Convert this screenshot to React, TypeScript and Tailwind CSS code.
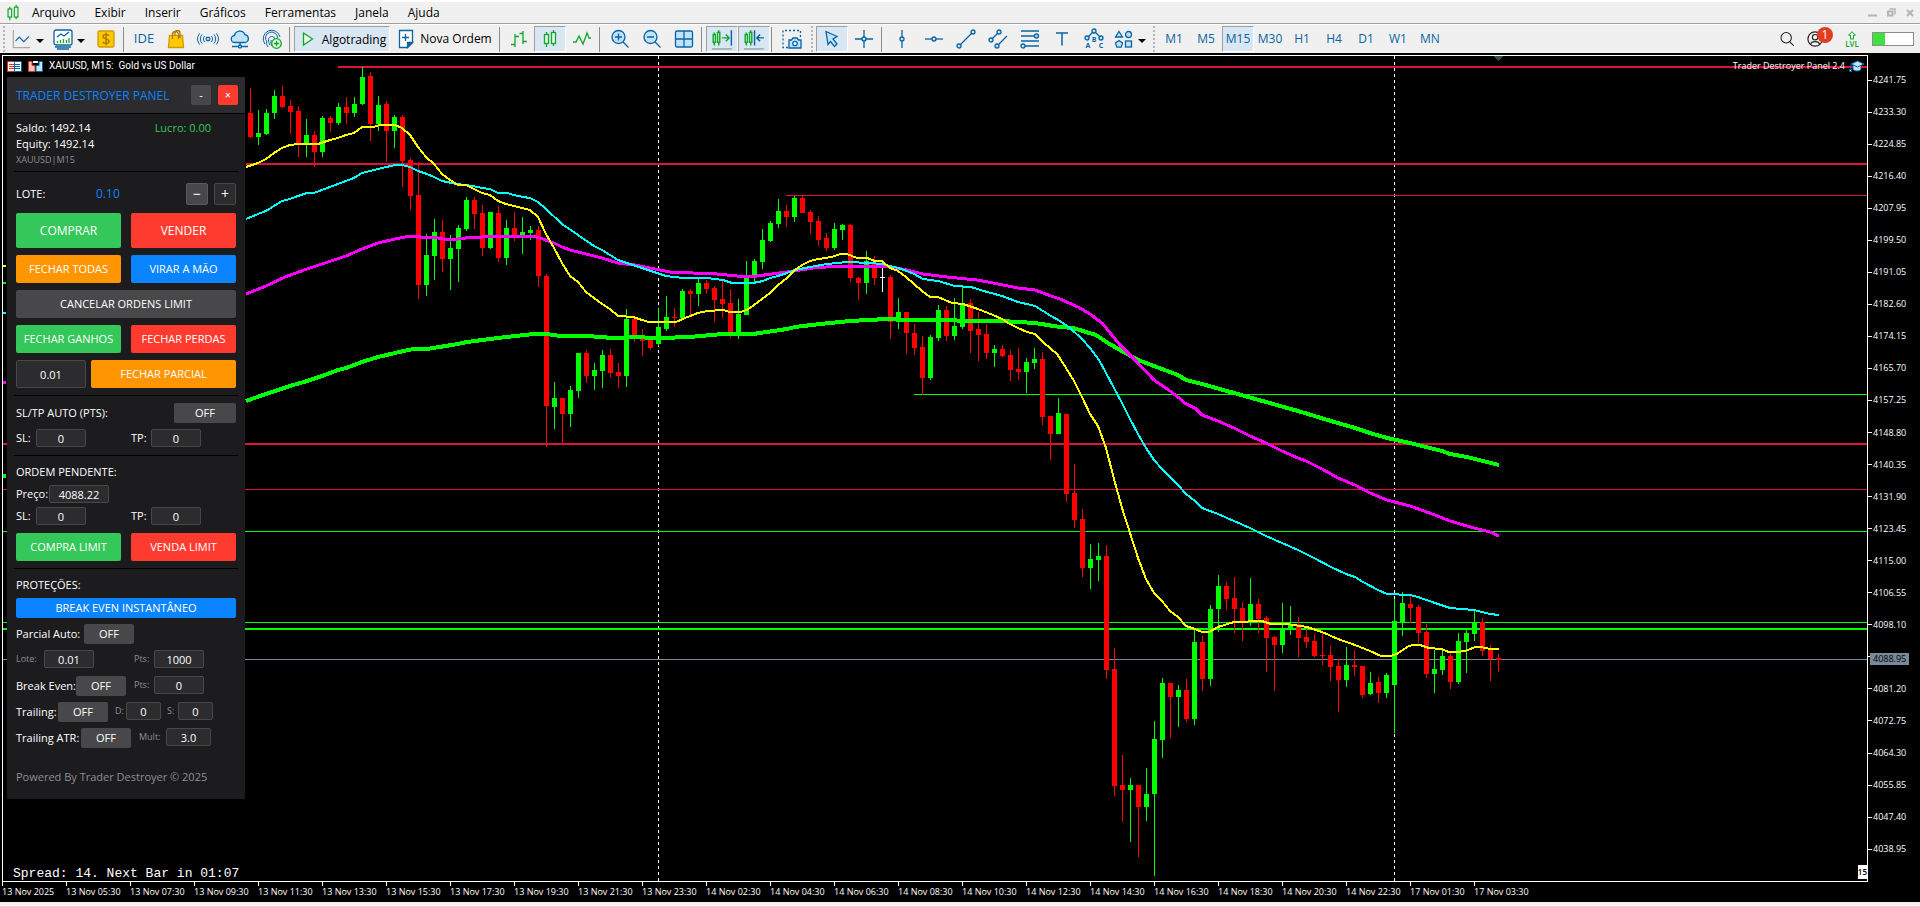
import type { ReactNode } from 'react'
import clsx from 'clsx'

const BLUE = '#0a64a4'
const SKY = '#bfe3fb'
const GREEN = '#12a52b'

// [direction, high, body top, body bottom, low], one bar every 8px
type Bar = ['g' | 'r' | 'w', number, number, number, number]

const BARS: Bar[] = [
  ['r', 88, 113, 137, 138], ['g', 110, 133, 137, 145], ['g', 109, 113, 134, 135], ['g', 90, 96, 113, 119],
  ['r', 86, 96, 107, 108], ['r', 100, 106, 112, 134], ['r', 106, 111, 143, 157], ['g', 119, 135, 144, 157],
  ['r', 131, 135, 152, 167], ['g', 116, 118, 152, 157], ['r', 116, 118, 123, 132], ['g', 103, 107, 123, 125],
  ['r', 97, 107, 113, 124], ['g', 97, 104, 113, 117], ['g', 67, 77, 104, 105], ['r', 72, 76, 124, 141],
  ['g', 96, 105, 124, 131], ['r', 101, 104, 131, 162], ['g', 115, 117, 131, 148], ['r', 115, 117, 161, 187],
  ['r', 158, 160, 196, 210], ['r', 162, 195, 285, 299], ['g', 234, 255, 285, 296], ['g', 219, 232, 256, 280],
  ['r', 220, 232, 259, 272], ['g', 235, 248, 259, 290], ['g', 225, 228, 249, 282], ['g', 197, 200, 229, 231],
  ['r', 197, 200, 214, 229], ['r', 205, 213, 248, 256], ['g', 212, 212, 248, 249], ['r', 206, 213, 258, 262],
  ['g', 220, 228, 258, 265], ['r', 212, 228, 236, 241], ['g', 217, 232, 236, 254], ['g', 226, 230, 233, 240],
  ['r', 226, 230, 276, 287], ['r', 274, 276, 406, 447], ['g', 382, 398, 407, 429], ['r', 398, 398, 414, 444],
  ['g', 386, 390, 414, 427], ['g', 353, 353, 391, 398], ['r', 350, 353, 376, 383], ['g', 363, 370, 376, 390],
  ['g', 350, 355, 371, 388], ['r', 349, 355, 373, 377], ['r', 363, 372, 376, 388], ['g', 309, 319, 376, 387],
  ['r', 318, 319, 337, 342], ['r', 329, 339, 341, 356], ['r', 338, 339, 348, 350], ['g', 308, 327, 344, 346],
  ['g', 296, 317, 329, 331], ['r', 308, 317, 318, 327], ['g', 289, 291, 318, 318], ['r', 289, 291, 294, 316],
  ['g', 278, 283, 294, 306], ['r', 280, 283, 289, 294], ['r', 286, 288, 300, 322], ['r', 281, 299, 304, 318],
  ['r', 289, 303, 334, 338], ['g', 299, 314, 334, 339], ['g', 261, 276, 315, 315], ['g', 259, 261, 276, 282],
  ['g', 229, 240, 262, 269], ['g', 221, 223, 241, 242], ['g', 199, 211, 224, 228], ['r', 205, 211, 217, 227],
  ['g', 196, 198, 217, 222], ['r', 196, 198, 213, 213], ['r', 210, 212, 222, 234], ['r', 216, 221, 240, 246],
  ['r', 233, 238, 248, 251], ['g', 223, 229, 248, 250], ['g', 224, 225, 230, 240], ['r', 224, 225, 278, 282],
  ['r', 277, 278, 283, 300], ['g', 251, 261, 283, 294], ['r', 256, 263, 278, 285], ['w', 268, 277, 278, 292],
  ['r', 275, 277, 322, 339], ['g', 298, 312, 322, 329], ['r', 312, 312, 333, 354], ['r', 324, 333, 348, 355],
  ['r', 336, 347, 378, 395], ['g', 335, 337, 378, 380], ['g', 305, 310, 338, 341], ['r', 306, 310, 336, 341],
  ['g', 298, 326, 336, 340], ['g', 287, 303, 327, 329], ['r', 299, 303, 331, 353], ['r', 312, 329, 335, 361],
  ['r', 324, 334, 353, 359], ['g', 345, 349, 353, 367], ['r', 345, 349, 356, 357], ['r', 350, 355, 370, 381],
  ['r', 348, 369, 372, 380], ['g', 358, 362, 372, 393], ['g', 348, 359, 363, 369], ['r', 352, 359, 417, 425],
  ['r', 416, 416, 434, 460], ['g', 398, 413, 434, 434], ['r', 414, 414, 494, 502], ['r', 464, 493, 520, 528],
  ['r', 509, 519, 568, 577], ['g', 544, 559, 568, 589], ['g', 543, 556, 560, 581], ['r', 545, 556, 670, 679],
  ['r', 648, 669, 786, 796], ['r', 755, 785, 790, 822], ['g', 778, 785, 790, 842], ['r', 785, 785, 807, 857],
  ['g', 768, 794, 807, 821], ['g', 721, 739, 794, 876], ['g', 678, 683, 740, 758], ['r', 683, 683, 697, 738],
  ['g', 685, 690, 697, 727], ['r', 679, 690, 719, 722], ['g', 629, 642, 719, 725], ['r', 636, 642, 679, 691],
  ['g', 605, 609, 679, 686], ['g', 575, 586, 609, 632], ['r', 582, 586, 599, 610], ['r', 577, 598, 609, 633],
  ['r', 602, 608, 621, 641], ['g', 578, 604, 621, 626], ['r', 599, 604, 619, 633], ['r', 616, 618, 638, 672],
  ['r', 636, 637, 645, 691], ['g', 603, 629, 645, 653], ['g', 606, 624, 629, 635], ['r', 617, 624, 638, 657],
  ['r', 629, 637, 642, 648], ['r', 634, 641, 656, 657], ['r', 632, 655, 656, 665], ['r', 646, 655, 667, 681],
  ['r', 659, 666, 680, 712], ['g', 647, 665, 680, 687], ['r', 650, 665, 667, 676], ['r', 666, 666, 695, 698],
  ['g', 672, 683, 694, 695], ['r', 677, 682, 693, 703], ['g', 673, 675, 693, 698], ['g', 599, 621, 685, 733],
  ['g', 592, 603, 623, 636], ['r', 596, 604, 608, 623], ['r', 605, 607, 633, 643], ['r', 624, 632, 674, 678],
  ['g', 650, 669, 674, 693], ['g', 651, 656, 670, 675], ['r', 652, 656, 682, 689], ['g', 633, 641, 682, 684],
  ['g', 630, 633, 642, 673], ['g', 611, 622, 634, 641], ['r', 618, 622, 651, 656], ['r', 645, 650, 659, 681],
  ['r', 654, 658, 660, 672],
]

const BAR_COLORS = { g: '#00ff00', r: '#ff0000', w: '#ffffff' }

// moving averages, slowest first
const AVERAGES = [
  {
    color: '#00ff00',
    width: 4,
    points:
      '246,401 266,394 290,386 307,381 322,376 338,370 346,368 362,362 378,357 395,353 413,349 427,349 458,344 467,342 498,338 533,334 547,334 560,336 587,336 613,338 640,337 650,338 660,338 690,337 723,334 753,334 787,329 795,327 820,324 850,321 887,319 907,320 940,320 973,321 1002,321 1035,323 1060,327 1073,328 1096,335 1108,343 1120,350 1138,360 1154,366 1178,375 1186,380 1202,384 1234,393 1266,402 1298,411 1331,421 1355,428 1370,433 1387,438 1410,443 1442,451 1450,454 1467,457 1499,465',
  },
  {
    color: '#ff00ff',
    width: 3,
    points:
      '246,294 266,286 285,277 307,269 322,264 346,256 362,249 378,243 395,239 410,236 420,237 433,237 443,239 458,239 473,237 482,237 490,236 498,237 507,236 533,236 540,238 554,243 562,247 570,250 602,258 618,263 635,265 660,270 670,272 693,273 717,274 737,276 757,276 787,272 813,268 840,266 857,266 887,266 907,270 923,274 947,277 977,280 993,283 1018,288 1035,290 1051,296 1060,299 1078,307 1090,314 1102,323 1120,345 1135,360 1154,380 1170,391 1178,397 1186,404 1195,408 1202,415 1210,418 1218,421 1234,428 1250,436 1266,443 1282,451 1298,458 1306,461 1322,469 1338,478 1355,485 1370,493 1387,500 1410,506 1435,515 1450,521 1467,526 1474,528 1490,532 1499,536',
  },
  {
    color: '#00ffff',
    width: 2,
    points:
      '246,219 258,214 266,211 274,206 282,201 290,199 298,196 307,193 314,193 330,187 346,181 354,178 362,173 378,169 395,165 402,165 410,167 418,171 427,174 434,177 442,181 457,184 473,186 482,188 490,189 498,193 507,193 514,195 523,197 530,198 538,202 546,209 562,224 578,235 594,246 602,250 618,260 627,263 642,268 651,271 660,274 666,276 683,278 707,278 723,280 732,283 753,283 763,281 770,278 778,276 787,273 795,270 810,267 827,264 847,262 870,263 882,264 898,268 907,271 914,274 923,279 938,281 955,286 971,287 987,292 1002,296 1018,302 1035,306 1043,311 1051,316 1060,321 1070,328 1082,339 1090,348 1099,360 1106,373 1122,403 1130,419 1138,434 1146,448 1154,460 1162,469 1170,477 1178,485 1186,494 1195,501 1202,508 1218,514 1234,521 1250,528 1266,536 1282,543 1298,550 1314,558 1331,567 1346,574 1355,577 1363,582 1378,590 1387,594 1410,595 1418,597 1435,603 1450,608 1474,610 1490,614 1499,615',
  },
  {
    color: '#ffff00',
    width: 2,
    points:
      '246,167 258,163 266,159 274,153 282,148 290,145 298,144 318,144 330,140 338,138 346,135 354,133 362,127 373,127 380,125 395,125 402,128 410,135 418,147 426,157 434,164 442,174 450,180 458,185 466,185 474,189 482,193 490,195 498,201 506,204 514,206 522,208 530,210 538,217 546,234 554,248 562,263 570,276 578,282 586,292 594,298 602,304 610,309 618,316 633,317 642,320 649,322 676,322 685,318 698,313 707,311 723,310 730,312 740,312 747,310 754,305 770,293 778,285 787,278 795,270 802,265 810,261 818,259 826,258 835,256 840,254 847,254 857,258 867,258 875,261 882,261 890,268 898,271 906,277 914,284 922,291 930,297 938,297 952,303 963,304 978,309 993,315 1002,319 1010,324 1018,328 1027,332 1035,334 1043,342 1051,349 1057,354 1061,360 1066,368 1074,381 1082,397 1090,414 1098,426 1106,448 1114,479 1122,508 1130,533 1138,558 1146,579 1154,593 1162,601 1170,611 1178,617 1186,626 1195,629 1202,632 1209,632 1218,627 1234,622 1262,621 1271,624 1287,624 1307,627 1322,632 1338,639 1355,645 1370,651 1381,656 1390,656 1397,654 1407,647 1412,645 1420,645 1429,648 1441,649 1449,652 1459,652 1468,650 1475,647 1481,647 1490,649 1499,649',
  },
]

// [start x, y, thickness, color]
const LEVELS: [number, number, number, string][] = [
  [338, 66, 2, '#dc143c'],
  [246, 163, 2, '#dc143c'],
  [786, 195, 1, '#dc143c'],
  [914, 394, 1, '#00ff00'],
  [3, 443, 2, '#dc143c'],
  [3, 489, 1, '#dc143c'],
  [3, 531, 1, '#00ff00'],
  [3, 622, 1, '#00ff00'],
  [3, 628, 2, '#00ff00'],
  [3, 659, 1, '#778899'],
]

// averages peeking out on the left of the panel
const STUBS: [number, number, string][] = [
  [265, 2, '#ffff00'],
  [282, 2, '#00ff00'],
  [312, 2, '#00ffff'],
  [381, 3, '#ff00ff'],
  [474, 4, '#00ff00'],
]

const PRICES = Array.from({ length: 25 }, (_, i) => (4241.75 - i * 8.45).toFixed(2))

const TIMES = [
  '13 Nov 2025', '13 Nov 05:30', '13 Nov 07:30', '13 Nov 09:30', '13 Nov 11:30', '13 Nov 13:30',
  '13 Nov 15:30', '13 Nov 17:30', '13 Nov 19:30', '13 Nov 21:30', '13 Nov 23:30', '14 Nov 02:30',
  '14 Nov 04:30', '14 Nov 06:30', '14 Nov 08:30', '14 Nov 10:30', '14 Nov 12:30', '14 Nov 14:30',
  '14 Nov 16:30', '14 Nov 18:30', '14 Nov 20:30', '14 Nov 22:30', '17 Nov 01:30', '17 Nov 03:30',
]

const MENU = ['Arquivo', 'Exibir', 'Inserir', 'Gráficos', 'Ferramentas', 'Janela', 'Ajuda']
const PERIODS = ['M1', 'M5', 'M15', 'M30', 'H1', 'H4', 'D1', 'W1', 'MN']

/* ---------- toolbar ---------- */

function Glyph({ children, color = BLUE, size = 20 }: { children: ReactNode; color?: string; size?: number }) {
  return (
    <svg width={size} height={size} viewBox="0 0 20 20" fill="none" stroke={color} strokeWidth="1.3" className="shrink-0 overflow-visible">
      {children}
    </svg>
  )
}

function Caret() {
  return (
    <svg width="8" height="4" viewBox="0 0 8 4" className="mt-1 shrink-0">
      <path d="M0 0h8L4 4z" fill="#000" />
    </svg>
  )
}

function Tool({ label, active, children, className = 'w-8' }: { label: string; active?: boolean; children: ReactNode; className?: string }) {
  return (
    <button
      type="button"
      aria-label={label}
      className={clsx(
        'flex h-[26px] shrink-0 items-center justify-center border',
        className,
        active ? 'border-t-[#a0a0a0] border-l-[#a0a0a0] border-r-white border-b-white bg-[#d9e6f3]' : 'border-transparent',
      )}
    >
      {children}
    </button>
  )
}

const Sep = () => (
  <div className="h-full w-1.5 shrink-0 pt-0.5 pb-px pl-px">
    <div className="h-full w-px bg-[#8c8c8c]" />
  </div>
)

const Grip = () => (
  <div className="flex h-full w-2 shrink-0 justify-center py-px">
    <div className="h-full border-l-2 border-dotted border-[#b4b4b4]" />
  </div>
)

function Candles({ size = 20 }: { size?: number }) {
  return (
    <Glyph color={GREEN} size={size}>
      <rect x="4.5" y="5.5" width="4" height="9" fill="#e6f7e8" />
      <path d="M6.5 3v2.5M6.5 14.5V18M13.5 1v2.5M13.5 14.5V17" />
      <rect x="11.5" y="3.5" width="4" height="11" fill="#e6f7e8" />
    </Glyph>
  )
}

function MenuBar() {
  return (
    <div className="flex h-6 shrink-0 items-center border-t-2 border-b border-t-white border-b-[#a0a0a0] bg-[#f0f0f0] pl-1">
      <Candles size={18} />
      <nav className="ml-2.5 flex gap-[19px] text-xs text-black">
        {MENU.map((m) => (
          <button key={m} type="button">
            {m}
          </button>
        ))}
      </nav>
      <div className="ml-auto flex items-center gap-2.5 pr-1.5">
        <button type="button" aria-label="Minimizar">
          <svg width="9" height="9" viewBox="0 0 9 9" className="block">
            <path d="M0 7.5h9" stroke="#b4b4b4" strokeWidth="2" />
          </svg>
        </button>
        <button type="button" aria-label="Restaurar">
          <svg width="9" height="9" viewBox="0 0 9 9" fill="none" stroke="#b4b4b4" className="block">
            <path d="M2.5 1H8v5.5" strokeWidth="1.5" />
            <rect x="1" y="3.5" width="4.5" height="4" strokeWidth="2" />
          </svg>
        </button>
        <button type="button" aria-label="Fechar">
          <svg width="8" height="8" viewBox="0 0 8 8" className="block">
            <path d="M1 1l6 6M7 1L1 7" stroke="#b4b4b4" strokeWidth="2" />
          </svg>
        </button>
      </div>
    </div>
  )
}

function Toolbar() {
  return (
    <div className="flex h-[29px] shrink-0 items-center overflow-hidden border-t border-white bg-[#f0f0f0] text-xs">
      <Grip />
      <Tool label="Gráfico de linha" className="w-10 gap-1.5">
        <Glyph size={18}>
          <path d="M1.500 0v19.500H20" stroke="#a8a8a8" />
          <path d="M4 12l4-4 5 5 6-6" />
        </Glyph>
        <Caret />
      </Tool>
      <Tool label="Indicadores" className="w-[42px] gap-1">
        <Glyph>
          <rect x="1" y="1" width="18" height="15" rx="2" fill="#fff" />
          <path d="M4 8l4-3 3 2 5-4M2 18h16M4 20h12" />
          <path d="M4.500 14v-2M7.500 14v-3M10.500 14v-4M13.500 14v-3M16 14V9" stroke={GREEN} />
        </Glyph>
        <Caret />
      </Tool>
      <Tool label="Cifrão">
        <Glyph color="#d19a00">
          <rect x="2" y="2" width="16" height="16" rx="1.500" fill="#ffc800" />
          <path d="M13 7c-.5-1.200-1.500-1.600-3-1.600-1.800 0-3 .8-3 2.200 0 3.200 6 1.600 6 4.600 0 1.500-1.200 2.300-3 2.300-1.600 0-2.700-.6-3.100-1.800M10 3.500v13" stroke="#b07c00" strokeWidth="1.500" />
        </Glyph>
      </Tool>
      <Sep />
      <Tool label="IDE">
        <span className="text-[13px] text-[#0a64a4]">IDE</span>
      </Tool>
      <Tool label="Market">
        <Glyph color="#d19a00">
          <path d="M3.500 6.500h13l1 12h-15z" fill="#ffc800" />
          <path d="M6.500 10V5.500a3 3 0 0 1 6 0V10M9 6V4a2.500 2.500 0 0 1 5 0v5" stroke="#b07c00" />
        </Glyph>
      </Tool>
      <Tool label="Sinais">
        <Glyph>
          <circle cx="10" cy="10" r="1.800" fill={SKY} />
          <path d="M6.500 7a4.500 4.500 0 0 0 0 6M13.500 7a4.500 4.500 0 0 1 0 6M4 5.500a7 7 0 0 0 0 9M16 5.500a7 7 0 0 1 0 9M1.500 4.500a9.500 9.500 0 0 0 0 11M18.500 4.500a9.500 9.500 0 0 1 0 11" strokeWidth="1" />
        </Glyph>
      </Tool>
      <Tool label="VPS">
        <Glyph>
          <path d="M5 13.500a3.500 3.500 0 0 1-.5-7 5.500 5.500 0 0 1 10.500-.8 4 4 0 0 1 .5 7.800z" fill={SKY} />
          <path d="M10 13.500v3M2 17.500h6M12 17.500h6" />
          <circle cx="10" cy="17.500" r="1.500" fill={SKY} />
        </Glyph>
      </Tool>
      <Tool label="Conta">
        <Glyph>
          <path d="M3 15A8.500 8.500 0 1 1 18 8M5 13a6 6 0 1 1 10.500-4M8 16c-2-3-2.500-8 1.500-8.500 2-.2 3 1 3.200 2.500M6 18c-1-1.500-1.500-3-1.500-5M10 17c-1-2-1.500-4-.8-6" strokeWidth="1" />
          <circle cx="14.500" cy="14.500" r="4.800" fill="#e6f9e8" stroke={GREEN} />
          <path d="M14.500 11.700v5.600M11.700 14.500h5.600" stroke={GREEN} />
        </Glyph>
      </Tool>
      <Sep />
      <Tool label="Algotrading" active className="w-24 gap-1">
        <Glyph color={GREEN}>
          <path d="M5.500 4l9 6-9 6z" fill="#e6f9e8" />
        </Glyph>
        <span className="pt-0.5">Algotrading</span>
      </Tool>
      <Tool label="Nova Ordem" className="w-27 gap-1">
        <Glyph>
          <path d="M3.500 1.500h13v12l-5 5h-8z" fill="#fff" />
          <path d="M16.500 13.500l-5 5v-5z" fill={BLUE} />
          <path d="M9.500 5v7M6 8.500h7" />
        </Glyph>
        Nova Ordem
      </Tool>
      <Sep />
      <Tool label="Barras" className="w-[30px]">
        <Glyph color={GREEN}>
          <path d="M6 5v13M2 15.500h4M6 7.500h4M14 2v13M10.500 4.500H14M14 12.500h4" />
        </Glyph>
      </Tool>
      <Tool label="Velas" active>
        <Candles />
      </Tool>
      <Tool label="Linha">
        <Glyph color={GREEN}>
          <path d="M1 13h3l3-6 4 8 4-11 2 5h2" />
        </Glyph>
      </Tool>
      <Sep />
      <Tool label="Mais zoom">
        <Glyph>
          <circle cx="8.500" cy="8" r="6.500" fill={SKY} />
          <path d="M13 13l5.500 5.500M8.500 4.500v7M5 8h7" />
        </Glyph>
      </Tool>
      <Tool label="Menos zoom">
        <Glyph>
          <circle cx="8.500" cy="8" r="6.500" fill={SKY} />
          <path d="M13 13l5.500 5.500M5 8h7" />
        </Glyph>
      </Tool>
      <Tool label="Organizar janelas">
        <Glyph>
          <rect x="1.500" y="2" width="17" height="16" rx="1.500" fill={SKY} />
          <path d="M10 2v16M1.500 10h17" />
        </Glyph>
      </Tool>
      <Sep />
      <Tool label="Rolagem automática" active>
        <Glyph color={GREEN} size={22}>
          <path d="M3 4v12M7 2v14M10 9h6M13.500 6l3 3-3 3" />
          <rect x="2" y="6" width="2" height="7" fill="#e6f9e8" />
          <rect x="6" y="4" width="2" height="9" fill="#e6f9e8" />
          <path d="M18.500 2v14" stroke={BLUE} />
          <path d="M1 19h18" stroke="#a0a0a0" />
        </Glyph>
      </Tool>
      <Tool label="Deslocar gráfico" active>
        <Glyph color={GREEN} size={22}>
          <path d="M3 4v12M7 2v14" />
          <rect x="2" y="6" width="2" height="7" fill="#e6f9e8" />
          <rect x="6" y="4" width="2" height="9" fill="#e6f9e8" />
          <path d="M10.500 2v14M19 9h-6M15.500 6l-3 3 3 3" stroke={BLUE} />
          <path d="M1 19h18" stroke="#a0a0a0" />
        </Glyph>
      </Tool>
      <Sep />
      <Tool label="Captura">
        <Glyph>
          <path d="M6 18.500H1v-17h17.500V9" strokeDasharray="2 2" />
          <path d="M7 11h2.500l1.500-2h4l1.500 2H19v8H7z" fill={SKY} />
          <circle cx="13" cy="14.500" r="2.200" fill="#fff" />
        </Glyph>
      </Tool>
      <Grip />
      <Tool label="Cursor" active>
        <Glyph>
          <path d="M4 2.500l11 5-4 2.500 4 5-2.500 2.500-4-5L6 15.500z" fill={SKY} />
        </Glyph>
      </Tool>
      <Tool label="Mira">
        <Glyph>
          <path d="M10 1v18M1 10h18" />
          <circle cx="10" cy="10" r="2" fill={SKY} />
        </Glyph>
      </Tool>
      <Sep />
      <Tool label="Linha vertical">
        <Glyph>
          <path d="M10 1v18" />
          <circle cx="10" cy="10" r="2" fill={SKY} />
        </Glyph>
      </Tool>
      <Tool label="Linha horizontal">
        <Glyph>
          <path d="M1 10h18" />
          <circle cx="10" cy="10" r="2" fill={SKY} />
        </Glyph>
      </Tool>
      <Tool label="Linha de tendência">
        <Glyph>
          <path d="M3 17L17 3" />
          <circle cx="3" cy="17" r="2" fill={SKY} />
          <circle cx="17" cy="3" r="2" fill={SKY} />
        </Glyph>
      </Tool>
      <Tool label="Canal">
        <Glyph>
          <path d="M3 11l8-8M9 17L19 7" />
          <circle cx="3" cy="11" r="2" fill={SKY} />
          <circle cx="11" cy="3" r="2" fill={SKY} />
          <circle cx="9" cy="17" r="2" fill={SKY} />
        </Glyph>
      </Tool>
      <Tool label="Fibonacci">
        <Glyph>
          <path d="M1 2h18M1 7h15M1 12h18M4 17h15" />
          <circle cx="16.500" cy="7" r="2" fill={SKY} />
          <circle cx="3" cy="17" r="2" fill={SKY} />
        </Glyph>
      </Tool>
      <Tool label="Texto">
        <Glyph>
          <path d="M4 4h12M10 4v12.500" strokeWidth="1.500" />
        </Glyph>
      </Tool>
      <Tool label="Elliott">
        <Glyph>
          <path d="M3 9l7-7 7 7" />
          <circle cx="3" cy="9" r="2" fill={SKY} />
          <circle cx="10" cy="2" r="2" fill={SKY} />
          <circle cx="17" cy="9" r="2" fill={SKY} />
          <g fill={BLUE} stroke="none" fontSize="7" fontWeight="700" textAnchor="middle">
            <text x="10" y="13">B</text>
            <text x="4" y="19">A</text>
            <text x="17" y="19">C</text>
          </g>
        </Glyph>
      </Tool>
      <Tool label="Objetos" className="w-10 gap-1">
        <Glyph>
          <path d="M5 2.500L8.500 8h-7zM5 11.500l3.500 2.600-1.300 4H2.800l-1.300-4z" fill={SKY} />
          <circle cx="14.500" cy="5.500" r="3" fill={SKY} />
          <rect x="11.500" y="12" width="6" height="6" fill={SKY} />
        </Glyph>
        <Caret />
      </Tool>
      <Grip />
      {PERIODS.map((p) => (
        <Tool key={p} label={p} active={p === 'M15'}>
          <span className="text-xs text-[#0a64a4]">{p}</span>
        </Tool>
      ))}
      <div className="ml-auto flex items-center pr-1.5">
        <Tool label="Buscar" className="w-7">
          <Glyph color="#222" size={16}>
            <circle cx="9" cy="8.500" r="6.500" />
            <path d="M13.500 13.500l5 5" />
          </Glyph>
        </Tool>
        <Tool label="Notificações" className="relative ml-px w-7">
          <Glyph color="#222" size={18}>
            <circle cx="9" cy="10" r="8" />
            <circle cx="9" cy="8" r="3" />
            <path d="M4 16c1-4 9-4 10 0" />
          </Glyph>
          <span className="absolute top-0 right-[-4px] flex size-4 items-center justify-center rounded-full bg-[#e03c20] text-xs text-white">
            1
          </span>
        </Tool>
        <div className="ml-3 flex w-5 flex-col items-center">
          <svg width="10" height="9" viewBox="0 0 10 9" fill="#e6f9e8" stroke={GREEN}>
            <path d="M5 .7l3.500 3.500H6.500V8h-3V4.200h-2z" />
          </svg>
          <span className="text-[8px] leading-[8px] font-semibold text-[#12a52b]">LVL</span>
        </div>
        <div className="ml-2.5 h-3.5 w-[42px] border border-[#8c8c8c] bg-white">
          <div className="h-full w-[30%] bg-[#40e040]" />
        </div>
      </div>
    </div>
  )
}

/* ---------- trading panel ---------- */

const TONES = {
  green: 'bg-[#34c759]',
  red: 'bg-[#ff3b30]',
  orange: 'bg-[#ff9500]',
  blue: 'bg-[#0a84ff]',
  gray: 'bg-[#48484a]',
}

function Action({ tone, children, className = 'h-7 flex-1' }: { tone: keyof typeof TONES; children: ReactNode; className?: string }) {
  return (
    <button type="button" className={clsx('flex items-center justify-center rounded-xs text-white', TONES[tone], className)}>
      {children}
    </button>
  )
}

function Toggle({ label, className = 'w-[50px]' }: { label: string; className?: string }) {
  return (
    <button type="button" aria-label={label} aria-pressed="false" className={clsx('h-5 shrink-0 rounded-xs bg-[#48484a] text-[11px]', className)}>
      OFF
    </button>
  )
}

type FieldProps = { id: string; label: string; value: string; labelClass: string; inputClass?: string }

function Field({ id, label, value, labelClass, inputClass = 'w-[50px]' }: FieldProps) {
  return (
    <>
      <label htmlFor={id} className={clsx('shrink-0 whitespace-nowrap', labelClass)}>
        {label}
      </label>
      <input
        id={id}
        defaultValue={value}
        className={clsx('h-[18px] shrink-0 rounded-xs border border-[#48484a] bg-[#2c2c2e] text-center', inputClass)}
      />
    </>
  )
}

const Rule = () => <hr className="-mx-0.5 border-black" />

function StopFields({ prefix }: { prefix: string }) {
  return (
    <div className="flex items-center">
      <Field id={`${prefix}-sl`} label="SL:" value="0" labelClass="w-5" />
      <Field id={`${prefix}-tp`} label="TP:" value="0" labelClass="ml-[45px] w-5" />
    </div>
  )
}

function TraderPanel() {
  return (
    <section className="absolute top-[21px] left-1 w-[238px] bg-[#1c1c1e] text-[11px] leading-4 font-medium text-white">
      <header className="flex h-[37px] items-center border-b border-black bg-[#2c2c2e] pr-[7px] pl-[9px]">
        <h1 className="pt-px text-xs font-normal whitespace-nowrap text-[#0a84ff]">TRADER DESTROYER PANEL</h1>
        <button type="button" aria-label="Minimizar painel" className="ml-auto size-5 rounded-xs bg-[#48484a]">
          -
        </button>
        <button type="button" aria-label="Fechar painel" className="ml-[7px] size-5 rounded-xs bg-[#ff3b30]">
          ×
        </button>
      </header>
      <div className="flex flex-col px-[9px] pt-1.5 pb-[14px]">
        <div className="flex">
          <span>Saldo: 1492.14</span>
          <span className="ml-auto pr-[25px] text-[#34c759]">Lucro: 0.00</span>
        </div>
        <span>Equity: 1492.14</span>
        <span className="mb-1 text-[9px] leading-[15px] font-normal text-[#8e8e93]">XAUUSD|M15</span>
        <Rule />

        <div className="mt-[11px] flex items-center">
          <span className="w-20">LOTE:</span>
          <span className="text-xs text-[#0a84ff]">0.10</span>
          <button type="button" aria-label="Diminuir lote" className="ml-auto size-[22px] rounded-xs border border-[#5a5a5c] bg-[#48484a] text-sm leading-4 font-normal">
            −
          </button>
          <button type="button" aria-label="Aumentar lote" className="ml-1.5 size-[22px] rounded-xs border border-[#48484a] bg-[#2c2c2e] text-sm leading-4 font-normal">
            +
          </button>
        </div>
        <div className="mt-2 flex flex-col gap-[7px]">
          <div className="flex gap-2.5 text-xs">
            <Action tone="green" className="h-[35px] flex-1">COMPRAR</Action>
            <Action tone="red" className="h-[35px] flex-1">VENDER</Action>
          </div>
          <div className="flex gap-2.5">
            <Action tone="orange">FECHAR TODAS</Action>
            <Action tone="blue">VIRAR A MÃO</Action>
          </div>
          <Action tone="gray" className="h-7">CANCELAR ORDENS LIMIT</Action>
          <div className="flex gap-2.5">
            <Action tone="green">FECHAR GANHOS</Action>
            <Action tone="red">FECHAR PERDAS</Action>
          </div>
          <div className="flex gap-[5px]">
            <input
              aria-label="Lote parcial"
              defaultValue="0.01"
              className="h-7 w-[70px] rounded-xs border border-[#48484a] bg-[#2c2c2e] text-center"
            />
            <Action tone="orange">FECHAR PARCIAL</Action>
          </div>
          <Rule />
        </div>

        <div className="mt-[7px] mb-1.5 flex items-center justify-between">
          <span>SL/TP AUTO (PTS):</span>
          <Toggle label="SL/TP automático" className="w-[62px]" />
        </div>
        <StopFields prefix="auto" />

        <div className="mt-2 flex flex-col">
          <Rule />
          <span className="mt-2">ORDEM PENDENTE:</span>
          <div className="mt-[5px] mb-1 flex items-center">
            <Field id="preco" label="Preço:" value="4088.22" labelClass="w-[33px]" inputClass="w-[60px]" />
          </div>
          <StopFields prefix="pendente" />
          <div className="mt-2 mb-[7px] flex gap-2.5">
            <Action tone="green">COMPRA LIMIT</Action>
            <Action tone="red">VENDA LIMIT</Action>
          </div>
          <Rule />
        </div>

        <span className="mt-2">PROTEÇÕES:</span>
        <div className="mt-[5px] flex flex-col gap-1.5">
          <Action tone="blue" className="h-5">BREAK EVEN INSTANTÂNEO</Action>
          <div className="flex h-5 items-center">
            <span className="w-[68px] whitespace-nowrap">Parcial Auto:</span>
            <Toggle label="Parcial automática" />
          </div>
          <div className="flex h-5 items-start">
            <Field id="parcial-lote" label="Lote:" value="0.01" labelClass="w-7 text-[9px] leading-[18px] font-normal text-[#8e8e93]" />
            <Field id="parcial-pts" label="Pts:" value="1000" labelClass="ml-10 w-5 text-[9px] leading-[18px] font-normal text-[#8e8e93]" />
          </div>
          <div className="flex h-5 items-start">
            <span className="w-[60px] leading-5 whitespace-nowrap">Break Even:</span>
            <Toggle label="Break even" />
            <Field id="be-pts" label="Pts:" value="0" labelClass="ml-2 w-5 text-[9px] leading-[18px] font-normal text-[#8e8e93]" />
          </div>
          <div className="flex h-5 items-start">
            <span className="w-[42px] leading-5 whitespace-nowrap">Trailing:</span>
            <Toggle label="Trailing" />
            <Field id="trail-d" label="D:" value="0" labelClass="ml-[7px] w-[11px] text-[9px] leading-[18px] font-normal text-[#8e8e93]" inputClass="w-[35px]" />
            <Field id="trail-s" label="S:" value="0" labelClass="ml-1.5 w-[11px] text-[9px] leading-[18px] font-normal text-[#8e8e93]" inputClass="w-[35px]" />
          </div>
          <div className="flex h-5 items-start">
            <span className="w-[65px] leading-5 whitespace-nowrap">Trailing ATR:</span>
            <Toggle label="Trailing ATR" />
            <Field id="atr" label="Mult:" value="3.0" labelClass="ml-2 w-[27px] text-[9px] leading-[18px] font-normal text-[#8e8e93]" inputClass="w-[45px]" />
          </div>
        </div>
        <footer className="mt-[21px] font-normal text-[#8e8e93]">Powered By Trader Destroyer © 2025</footer>
      </div>
    </section>
  )
}

/* ---------- chart ---------- */

function PriceChart() {
  return (
    <svg viewBox="3 56 1864 825" preserveAspectRatio="none" shapeRendering="crispEdges" className="absolute inset-0 size-full">
      {[658, 1394].map((x) => (
        <path key={x} d={`M${x + 0.5} 56V881`} stroke="#fff" strokeDasharray="3 3" />
      ))}
      {LEVELS.map(([x, y, h, color]) => (
        <rect key={y} x={x} y={y} width={1867 - x} height={h} fill={color} />
      ))}
      {STUBS.map(([y, h, color]) => (
        <rect key={y} x="3" y={y} width="3" height={h} fill={color} />
      ))}
      {BARS.map(([dir, high, top, bottom, low], i) => {
        const x = 250 + i * 8
        return (
          <g key={x} fill={BAR_COLORS[dir]}>
            <rect x={x} y={high} width="1" height={low - high} />
            <rect x={x - 2} y={top} width="5" height={Math.max(1, bottom - top)} />
          </g>
        )
      })}
      {AVERAGES.map((ma) => (
        <polyline key={ma.color + ma.width} points={ma.points} fill="none" stroke={ma.color} strokeWidth={ma.width} />
      ))}
      <path d="M1494 56h9l-4.500 5z" fill="#2f4f4f" />
    </svg>
  )
}

function ChartTitle() {
  return (
    <div className="absolute top-1 left-1 flex items-center text-[10px] leading-3 text-white">
      <svg width="15" height="11" viewBox="0 0 15 11">
        <path d="M.5.5h7v10h-7z" fill="#fff" stroke="#d8342c" />
        <path d="M7.500.5h7v10h-7z" fill="#fff" stroke="#0a64a4" />
        <path d="M2 3.500h5M2 5.500h5M2 7.500h5" stroke="#d8342c" />
        <path d="M8 3.500h5M8 5.500h5M8 7.500h5" stroke="#0a64a4" />
      </svg>
      <svg width="15" height="11" viewBox="0 0 15 11" className="ml-1.5">
        <path d="M.5.5H4v4h3v6H.5z" fill="#f6c4c0" stroke="#d8342c" />
        <path d="M14.500.5H11v4H8v6h6.500z" fill={SKY} stroke={BLUE} />
        <path d="M5 0h5v2H5z" fill="#fff" />
      </svg>
      <span className="ml-1.5 font-['Roboto',sans-serif] whitespace-pre">XAUUSD, M15:{'  '}Gold vs US Dollar</span>
    </div>
  )
}

function ExpertBadge() {
  return (
    <div className="absolute top-1 right-0.5 flex items-center gap-1 text-[9px] leading-3 text-white">
      Trader Destroyer Panel 2.4
      <svg width="16" height="12" viewBox="0 0 16 12" fill={SKY} stroke={BLUE}>
        <path d="M4 5.500v4c2 2 6 2 8 0v-4" />
        <path d="M8.500 1L15 4 8.500 7 2 4z" />
        <path d="M2 4.500v5" />
        <path d="M.5 9.500h2v2h-2z" />
      </svg>
    </div>
  )
}

export default function App() {
  return (
    <div className="flex h-screen flex-col overflow-hidden bg-[#f0f0f0] font-['Open_Sans','Noto_Sans',sans-serif]">
      <MenuBar />
      <Toolbar />
      <main className="flex min-h-0 flex-1 bg-black pt-0.5 pl-0.5">
        <div className="flex min-w-0 flex-1 flex-col">
          <div className="relative min-h-0 flex-1 border border-white">
            <PriceChart />
            <ChartTitle />
            <ExpertBadge />
            <TraderPanel />
            <p className="absolute bottom-0 left-2.5 font-['Liberation_Mono',monospace] text-[13px] leading-[14px] text-white">
              Spread: 14. Next Bar in 01:07
            </p>
            <span className="absolute right-0 bottom-0.5 bg-white text-[8px] leading-[14px] font-semibold text-black">15</span>
          </div>
          <div className="flex h-5 shrink-0 overflow-hidden text-[9px] leading-3 text-white">
            {TIMES.map((t) => (
              <div key={t} className="w-16 shrink-0 whitespace-nowrap">
                <div className="h-1 w-px bg-white" />
                {t}
              </div>
            ))}
          </div>
        </div>
        <div className="relative flex w-[52px] shrink-0 flex-col pt-[9px] pb-[37px] text-[9px] leading-3 text-white">
          {PRICES.map((p) => (
            <div key={p} className="flex flex-1 items-center">
              <span className="mr-px h-px w-1 bg-white" />
              {/* covered by the current price tag */}
              {p !== '4089.65' && p}
            </div>
          ))}
          <span className="absolute top-[598px] left-0.5 w-[39px] bg-[#778899] pl-[3px] text-black">4088.95</span>
        </div>
      </main>
      <div className="h-1 shrink-0 border-b border-white" />
    </div>
  )
}
